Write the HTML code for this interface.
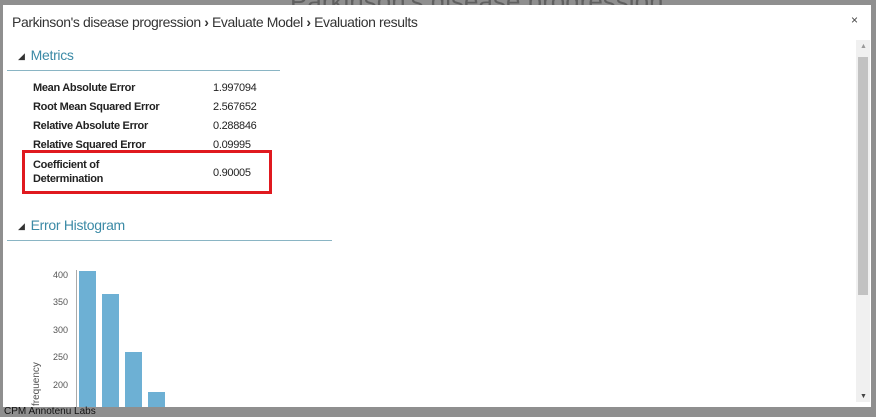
<!DOCTYPE html>
<html><head><style>
body{margin:0;width:876px;height:414px;background:#8f8f8f;position:relative;overflow:hidden;font-family:"Liberation Sans",sans-serif}
.bgtxt{position:absolute;color:#333;font-size:26px;top:-14px;left:290px;opacity:.5}
.dlg{position:absolute;left:3px;top:5px;width:868px;height:402px;background:#fff}
.title{position:absolute;left:12px;top:14px;font-size:14px;color:#333;letter-spacing:-0.4px}
.x{position:absolute;font-size:12px;color:#444}
.sec{position:absolute;color:#3b8aa6;font-size:14px;letter-spacing:-0.3px}
.tri{font-size:9px;color:#333;margin-right:6px;vertical-align:1px}
.line{position:absolute;height:1px;background:#8ab5c4}
.m{position:absolute;font-size:11px;font-weight:bold;color:#222;line-height:14px;letter-spacing:-0.3px}
.box{position:absolute;left:22px;top:150px;width:244px;height:38px;border:3px solid #e0191f}
.sb{position:absolute;left:856px;top:40px;width:14px;height:362px;background:#f0f0f0}
.th{position:absolute;left:858px;top:57px;width:10px;height:238px;background:#c2c2c2}
.bar{position:absolute;background:#6db0d4;width:17px}
.tk{position:absolute;font-size:9px;color:#555;left:50px}
</style></head><body>
<div class="bgtxt">Parkinson's disease progression</div>
<div class="dlg"></div>
<div class="title">Parkinson's disease progression <b>›</b> Evaluate Model <b>›</b> Evaluation results</div>
<div class="x" style="right:18px;top:13px">×</div>
<div class="sec" style="left:18px;top:47px"><span class="tri">◢</span>Metrics</div>
<div class="line" style="left:7px;top:70px;width:273px"></div>
<div class="m" style="left:33px;top:81px">Mean Absolute Error</div><div class="m" style="left:213px;top:81px;font-weight:normal">1.997094</div>
<div class="m" style="left:33px;top:100px">Root Mean Squared Error</div><div class="m" style="left:213px;top:100px;font-weight:normal">2.567652</div>
<div class="m" style="left:33px;top:119px">Relative Absolute Error</div><div class="m" style="left:213px;top:119px;font-weight:normal">0.288846</div>
<div class="m" style="left:33px;top:138px">Relative Squared Error</div><div class="m" style="left:213px;top:138px;font-weight:normal">0.09995</div>
<div class="m" style="left:33px;top:158px">Coefficient of<br>Determination</div><div class="m" style="left:213px;top:166px;font-weight:normal">0.90005</div>
<div class="box"></div>
<div class="sec" style="left:18px;top:217px"><span class="tri">◢</span>Error Histogram</div>
<div class="line" style="left:7px;top:240px;width:325px"></div>
<div class="sb"></div><div class="th"></div>
<div class="x" style="left:860px;top:393px;font-size:7px">▼</div>
<div class="x" style="left:860px;top:43px;font-size:7px;color:#999">▲</div>
<div style="position:absolute;left:76px;top:270px;width:1px;height:137px;background:#aaa"></div>
<div class="tk" style="left:53px;top:270px">400</div>
<div class="tk" style="left:53px;top:297px">350</div>
<div class="tk" style="left:53px;top:325px">300</div>
<div class="tk" style="left:53px;top:352px">250</div>
<div class="tk" style="left:53px;top:380px">200</div>
<div style="position:absolute;transform:rotate(-90deg);transform-origin:left top;font-size:10px;color:#555;top:406px;left:31px">frequency</div>
<div class="bar" style="left:79px;top:271px;height:136px"></div>
<div class="bar" style="left:102px;top:294px;height:113px"></div>
<div class="bar" style="left:125px;top:352px;height:55px"></div>
<div class="bar" style="left:148px;top:392px;height:15px"></div>
<div style="position:absolute;left:4px;top:406px;font-size:10px;color:#111">CPM Annotenu Labs</div>
</body></html>
